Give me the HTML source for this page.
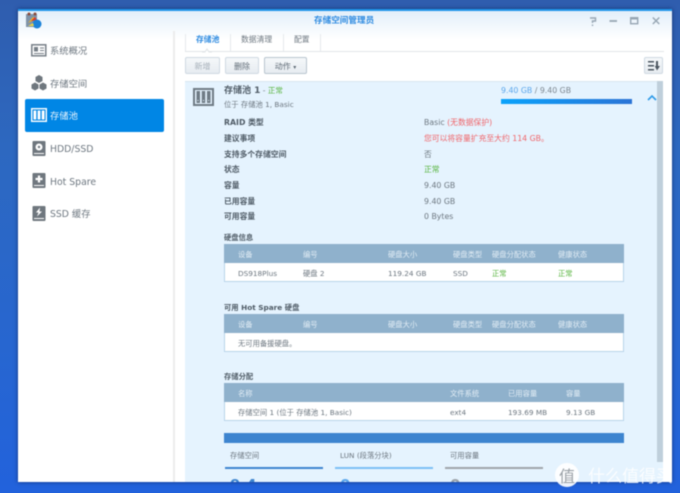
<!DOCTYPE html>
<html lang="zh"><head><meta charset="utf-8">
<style>
html,body{margin:0;padding:0}
body{width:680px;height:493px;overflow:hidden;position:relative;background:linear-gradient(180deg,#2f5dae 0%,#2d68c0 30%,#2766d0 70%,#2262dc 100%);font-family:"DejaVu Sans","Noto Sans CJK SC",sans-serif;font-size:7.8px;color:#6d7780}
.a{position:absolute;white-space:nowrap}
#blur{position:absolute;left:0;top:0;width:680px;height:493px;filter:blur(.45px)}
#win{position:absolute;left:18px;top:9px;width:654px;height:473px;background:#fff;overflow:hidden;box-shadow:0 0 4px rgba(10,30,80,.7);}
#win .i{position:absolute;white-space:nowrap}
.t{line-height:12px;height:12px}
.b{font-weight:bold;color:#4f5b66}
.g{color:#55b33b}.r{color:#f0656a}
.s{font-size:9.300px}
.btn{position:absolute;box-sizing:border-box;border:1px solid #cfd9e2;border-radius:2px;background:linear-gradient(#f5f8fa,#e7ecf1);text-align:center;line-height:17px;color:#5f6b76;font-size:8px}
.h{position:absolute;left:206px;width:400px;height:19px;background:#8fb1cc}
.row{position:absolute;left:206px;width:398px;height:18px;background:#fff;border:1px solid #b9d4ea;border-top:0}
.hc{position:absolute;color:#e2edf5;line-height:12px;white-space:nowrap;font-size:7.300px}
.c{position:absolute;color:#6d7780;line-height:12px;white-space:nowrap;font-size:7.300px}
.ti{font-size:7.300px}
</style></head><body>
<div id="blur">
<div id="win">
<div class="i" style="left:0;top:0;width:654px;height:2px;background:#1f96ea"></div>
<div class="i" style="left:0;top:2px;width:654px;height:28px;background:linear-gradient(#e2effa,#ffffff)"></div>
<svg class="i" style="left:7px;top:3px" width="17" height="17" viewBox="0 0 17 17"><rect x="1" y="2" width="11" height="13" fill="#7f93a8"/><circle cx="4" cy="2" r="1.500" fill="#8a4a3a"/><circle cx="10" cy="2" r="1.500" fill="#8a4a3a"/><path d="M3 11l5-6 3 2z" fill="#f0b020"/><path d="M6 9l4-4 2 3z" fill="#d8362a"/><circle cx="12" cy="12" r="4.500" fill="#1c82d8"/><path d="M3 14l5-3 1 3z" fill="#e8d24a"/></svg>
<div class="i t" style="left:296px;top:5px;font-size:8.600px;color:#2d8ae0;font-weight:bold;font-family:'Noto Sans CJK SC',sans-serif;line-height:13px;height:13px">存储空间管理员</div>
<svg class="i" style="left:566px;top:5px" width="84" height="14" viewBox="0 0 84 14" fill="none" stroke="#97a6b3" stroke-width="1.400"><path d="M6 4h5.500v3h-3v2M8.500 10.500v1.500"/><path d="M25.500 7h7.500" stroke-width="1.800"/><rect x="46.700" y="3.700" width="7" height="6"/><path d="M46.700 4.500h7" stroke-width="2"/><path d="M68.800 3.500l6.500 6.500M75.300 3.500L68.800 10"/></svg>

<!-- sidebar -->
<div class="i" style="left:155px;top:22px;width:2px;height:452px;background:#ececec"></div>
<div class="i" style="left:7px;top:90px;width:139px;height:33px;background:#0086e5;border-radius:2px"></div>
<svg class="i" style="left:13px;top:34px" width="16" height="15" viewBox="0 0 16 15"><rect x=".8" y="1.800" width="14" height="11" fill="#fff" stroke="#777f87" stroke-width="1.500"/><rect x="3" y="4" width="4" height="4.500" fill="#777f87"/><path d="M9 5h4M9 7.500h4M3 10.500h10" stroke="#777f87" stroke-width="1"/></svg>
<div class="i t s" style="left:32px;top:37px">系统概况</div>
<svg class="i" style="left:13px;top:66px" width="16" height="16" viewBox="0 0 16 16" fill="#6f777e"><path d="M8 0l3.500 2v4L8 8 4.500 6V2z"/><path d="M4 7.500l3.500 2v4L4 15.500.5 13.500v-4z"/><path d="M12 7.500l3.500 2v4L12 15.500 8.500 13.500v-4z"/></svg>
<div class="i t s" style="left:32px;top:70px">存储空间</div>
<svg class="i" style="left:13px;top:99px" width="16" height="14" viewBox="0 0 16 14"><rect x=".7" y=".7" width="14.600" height="12.600" fill="#0086e5" stroke="#fff" stroke-width="1.400"/><rect x="2.500" y="2.500" width="2.800" height="9" fill="#fff"/><rect x="6.600" y="2.500" width="2.800" height="9" fill="#fff"/><rect x="10.700" y="2.500" width="2.800" height="9" fill="#fff"/></svg>
<div class="i t s" style="left:32px;top:102px;color:#e8f4fd">存储池</div>
<svg class="i" style="left:14px;top:132px" width="14" height="15" viewBox="0 0 14 15"><rect width="13" height="15" x=".5" rx="1" fill="#6f777e"/><circle cx="7" cy="6" r="3.500" fill="#fff"/><circle cx="7" cy="6" r="1.200" fill="#6f777e"/><path d="M2 12.500h10" stroke="#fff" stroke-width="1"/></svg>
<div class="i t s" style="left:32px;top:135px">HDD/SSD</div>
<svg class="i" style="left:14px;top:164px" width="14" height="15" viewBox="0 0 14 15"><rect width="13" height="15" x=".5" rx="1" fill="#6f777e"/><path d="M7 2.500v7M3.500 6h7" stroke="#fff" stroke-width="2.200"/><path d="M2 12.500h10" stroke="#fff" stroke-width="1"/></svg>
<div class="i t s" style="left:32px;top:168px">Hot Spare</div>
<svg class="i" style="left:14px;top:197px" width="14" height="15" viewBox="0 0 14 15"><rect width="13" height="15" x=".5" rx="1" fill="#6f777e"/><path d="M8 1.500L4 6.500h2.500L5 10.500 10 5.500H7.500z" fill="#fff"/><path d="M2 12.500h10" stroke="#fff" stroke-width="1"/></svg>
<div class="i t s" style="left:32px;top:200px">SSD 缓存</div>

<!-- tabs -->
<div class="i t" style="left:178px;top:25px;color:#2d8ae0;font-size:7.800px;font-weight:bold;font-family:'Noto Sans CJK SC',sans-serif">存储池</div>
<div class="i t" style="left:223px;top:25px;font-size:7.800px">数据清理</div>
<div class="i t" style="left:276px;top:25px;font-size:7.800px">配置</div>
<div class="i" style="left:167px;top:25px;width:1px;height:17px;background:#e6e9ec"></div>
<div class="i" style="left:212px;top:25px;width:1px;height:17px;background:#e6e9ec"></div>
<div class="i" style="left:265px;top:25px;width:1px;height:17px;background:#e6e9ec"></div>
<div class="i" style="left:302px;top:25px;width:1px;height:17px;background:#e6e9ec"></div>
<div class="i" style="left:167px;top:42px;width:479px;height:1px;background:#e2e5e8"></div>
<svg class="i" style="left:183px;top:38px" width="12" height="6" viewBox="0 0 12 6"><path d="M1 5h3l2-3 2 3h3" fill="#fff" stroke="#dfe3e6"/></svg>

<!-- toolbar -->
<div class="btn" style="left:167px;top:48px;width:35px;height:17px;color:#a6b0b9">新增</div>
<div class="btn" style="left:207px;top:48px;width:34px;height:17px">删除</div>
<div class="btn" style="left:246px;top:48px;width:43px;height:17px;border-color:#b9c5cf">动作 <span style="font-size:6px">▾</span></div>
<div class="btn" style="left:626px;top:48px;width:19px;height:17px"></div>
<svg class="i" style="left:630px;top:52px" width="12" height="10" viewBox="0 0 12 10" fill="#4c5660"><path d="M0 0h6v1.500H0zM0 4h6v1.500H0zM0 8h6v1.500H0z"/><path d="M8 0h2v5h2L9 9.500 6.800 5H8z"/></svg>

<!-- panel -->
<div class="i" style="left:167px;top:72px;width:478px;height:402px;background:#e5f3fe;border-top:1px solid #d8e6f0;box-sizing:border-box"></div>
<div class="i" style="left:639px;top:72px;width:6px;height:381px;background:#bfcfdb"></div>
<svg class="i" style="left:175px;top:79px" width="21" height="18" viewBox="0 0 21 18"><rect x="1" y="1" width="19" height="16" fill="#e5f3fe" stroke="#6f7b85" stroke-width="2"/><rect x="3.500" y="3" width="3.500" height="12" fill="#6f7b85"/><rect x="8.750" y="3" width="3.500" height="12" fill="#6f7b85"/><rect x="14" y="3" width="3.500" height="12" fill="#6f7b85"/><path d="M5 12v1M10.500 12v1M15.700 12v1" stroke="#e5f3fe"/></svg>
<div class="i" style="left:206px;top:75px;font-size:9px;line-height:14px;font-weight:bold;color:#515d68">存储池 1<span style="font-size:7.500px;font-weight:normal;color:#7a848d"> - </span><span class="g" style="font-size:7.500px;font-weight:normal">正常</span></div>
<div class="i t ti" style="left:206px;top:90px">位于 存储池 1, Basic</div>
<div class="i t" style="left:483px;top:76px;color:#5aa6ec;font-size:7.800px">9.40 GB <span style="color:#7c868f">/ 9.40 GB</span></div>
<div class="i" style="left:483px;top:90px;width:131px;height:5px;background:linear-gradient(90deg,#0aa2fb,#2b74d6)"></div>
<svg class="i" style="left:628px;top:85px" width="12" height="8" viewBox="0 0 12 8"><path d="M2 6l4-4 4 4" fill="none" stroke="#2f9be8" stroke-width="1.600"/></svg>

<!-- props -->
<div class="i t b" style="left:206px;top:108px">RAID 类型</div>
<div class="i t b" style="left:206px;top:124px">建议事项</div>
<div class="i t b" style="left:206px;top:140px">支持多个存储空间</div>
<div class="i t b" style="left:206px;top:155px">状态</div>
<div class="i t b" style="left:206px;top:171px">容量</div>
<div class="i t b" style="left:206px;top:187px">已用容量</div>
<div class="i t b" style="left:206px;top:202px">可用容量</div>
<div class="i t" style="left:406px;top:108px">Basic <span class="r">(无数据保护)</span></div>
<div class="i t r" style="left:406px;top:124px">您可以将容量扩充至大约 114 GB。</div>
<div class="i t" style="left:406px;top:140px">否</div>
<div class="i t g" style="left:406px;top:155px">正常</div>
<div class="i t" style="left:406px;top:171px">9.40 GB</div>
<div class="i t" style="left:406px;top:187px">9.40 GB</div>
<div class="i t" style="left:406px;top:202px">0 Bytes</div>

<!-- table 1 -->
<div class="i t b ti" style="left:206px;top:223px">硬盘信息</div>
<div class="h" style="top:235px"></div><div class="row" style="top:254px"></div>
<div class="hc" style="left:220px;top:240px">设备</div><div class="hc" style="left:285px;top:240px">编号</div><div class="hc" style="left:370px;top:240px">硬盘大小</div><div class="hc" style="left:435px;top:240px">硬盘类型</div><div class="hc" style="left:474px;top:240px">硬盘分配状态</div><div class="hc" style="left:540px;top:240px">健康状态</div>
<div class="c" style="left:220px;top:259px">DS918Plus</div><div class="c" style="left:285px;top:259px">硬盘 2</div><div class="c" style="left:370px;top:259px">119.24 GB</div><div class="c" style="left:435px;top:259px">SSD</div><div class="c" style="left:474px;top:259px;color:#55b33b">正常</div><div class="c" style="left:540px;top:259px;color:#55b33b">正常</div>

<!-- table 2 -->
<div class="i t b ti" style="left:206px;top:293px">可用 Hot Spare 硬盘</div>
<div class="h" style="top:305px"></div><div class="row" style="top:324px"></div>
<div class="hc" style="left:220px;top:310px">设备</div><div class="hc" style="left:285px;top:310px">编号</div><div class="hc" style="left:370px;top:310px">硬盘大小</div><div class="hc" style="left:435px;top:310px">硬盘类型</div><div class="hc" style="left:474px;top:310px">硬盘分配状态</div><div class="hc" style="left:540px;top:310px">健康状态</div>
<div class="c" style="left:220px;top:329px">无可用备援硬盘。</div>

<!-- table 3 -->
<div class="i t b ti" style="left:206px;top:362px">存储分配</div>
<div class="h" style="top:374px"></div><div class="row" style="top:393px"></div>
<div class="hc" style="left:220px;top:379px">名称</div><div class="hc" style="left:432px;top:379px">文件系统</div><div class="hc" style="left:490px;top:379px">已用容量</div><div class="hc" style="left:548px;top:379px">容量</div>
<div class="c" style="left:220px;top:398px">存储空间 1 (位于 存储池 1, Basic)</div><div class="c" style="left:432px;top:398px">ext4</div><div class="c" style="left:490px;top:398px">193.69 MB</div><div class="c" style="left:548px;top:398px">9.13 GB</div>

<div class="i" style="left:206px;top:424px;width:400px;height:10px;background:#3d84cf"></div>
<div class="i t ti" style="left:212px;top:441px">存储空间</div>
<div class="i t ti" style="left:322px;top:441px">LUN (段落分块)</div>
<div class="i t ti" style="left:432px;top:441px">可用容量</div>
<div class="i" style="left:207px;top:458px;width:98px;height:2px;background:#3d84cf"></div>
<div class="i" style="left:317px;top:458px;width:98px;height:2px;background:#7cc0f5"></div>
<div class="i" style="left:427px;top:458px;width:98px;height:2px;background:#a0a5aa"></div>
<div class="i" style="left:212px;top:467px;font-size:15px;line-height:18px;font-weight:bold;color:#3d84cf">9.4</div>
<div class="i" style="left:322px;top:467px;font-size:15px;line-height:18px;font-weight:bold;color:#5aa6ec">0</div>
<div class="i" style="left:432px;top:467px;font-size:15px;line-height:18px;font-weight:bold;color:#9aa1a8">0</div>
</div>
<!-- watermark -->
<div class="a" style="left:555px;top:463px;width:24px;height:24px;border-radius:50%;background:rgba(255,255,255,.92);color:#9aa0a6;font-size:16px;line-height:24px;text-align:center;font-family:'Noto Sans CJK SC',sans-serif">值</div>
<div class="a" style="left:588px;top:464px;font-size:17px;line-height:22px;color:rgba(255,255,255,.82);font-family:'Noto Sans CJK SC',sans-serif">什么值得买</div>
</div>
</body></html>
